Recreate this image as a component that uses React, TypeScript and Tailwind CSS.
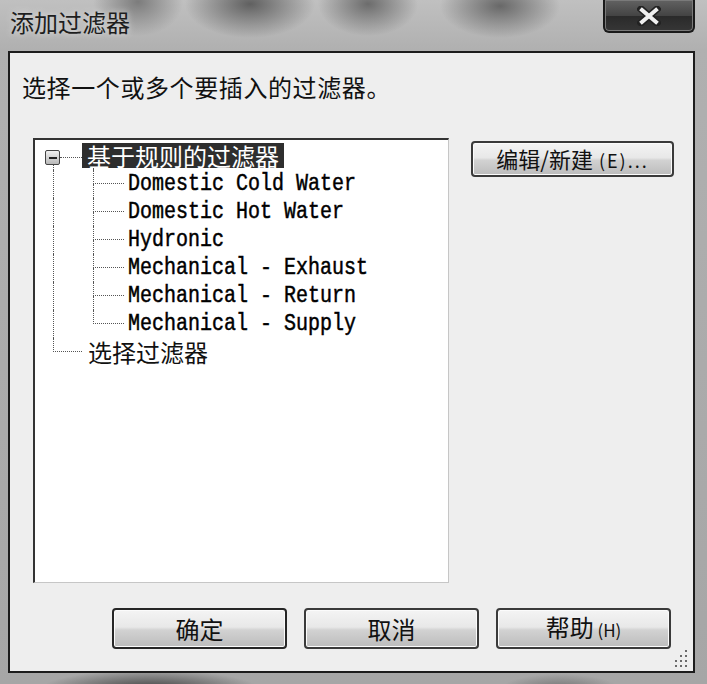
const cjk = "font-['Noto_Sans_CJK_SC','Noto_Sans',sans-serif]";
const mono = "font-['Liberation_Mono','DejaVu_Sans_Mono',monospace]";

const children = [
  "Domestic Cold Water",
  "Domestic Hot Water",
  "Hydronic",
  "Mechanical - Exhaust",
  "Mechanical - Return",
  "Mechanical - Supply",
];

function WinButton({ children, className = "" }: { children: React.ReactNode; className?: string }) {
  return (
    <div
      className={`flex items-center justify-center rounded-[4px] border-2 border-[#3a3a3a] bg-[linear-gradient(to_bottom,#f4f4f4_0%,#e8e8e8_46%,#d2d2d2_54%,#bcbcbc_100%)] shadow-[inset_0_0_0_1px_#fbfbfb] text-[#111] ${className}`}
    >
      {children}
    </div>
  );
}

function Grip() {
  const dots = [
    [14, 0], [14, 5], [9, 5], [14, 10], [9, 10], [4, 10], [14, 15], [9, 15], [4, 15],
  ];
  return (
    <svg width="19" height="18" viewBox="0 0 19 18">
      {dots.map(([x, y], i) => (
        <rect key={i} x={x} y={y} width="2" height="2" fill="#6a6a6a" />
      ))}
    </svg>
  );
}

export default function App() {
  return (
    <div className="w-[707px] h-[684px] overflow-hidden flex flex-col bg-[radial-gradient(ellipse_45px_34px_at_138px_2px,#7c7c7c,transparent),radial-gradient(ellipse_65px_34px_at_250px_4px,#606060,transparent),radial-gradient(ellipse_50px_32px_at_368px_4px,#6c6c6c,transparent),radial-gradient(ellipse_60px_32px_at_500px_6px,#686868,transparent),radial-gradient(ellipse_110px_20px_at_150px_690px,#3c3c3c,transparent),radial-gradient(ellipse_60px_16px_at_560px_690px,#707070,transparent),linear-gradient(to_bottom,#c0c0c0,#b0b0b0_50px,#a6a6a6)]">
      {/* title bar */}
      <div className="h-[51px] flex justify-between items-start shrink-0">
        <div className={`${cjk} pl-[10px] pt-[8px] text-[24px] leading-[28px] text-[#1e1e1e] [text-shadow:0_0_6px_#e6e6e6]`}>
          添加过滤器
        </div>
        <div className="mr-[12px] w-[92px] h-[33px] rounded-b-[6px] border-2 border-t-0 border-[#1a1a1a] bg-[linear-gradient(to_bottom,#626262,#444_50%,#2a2a2a_52%,#363636)] shadow-[inset_0_0_0_1px_#7a7a7a] flex items-center justify-center">
          <svg width="24" height="20" viewBox="0 0 24 20">
            <path d="M4 3 L20 17 M20 3 L4 17" stroke="#222" strokeWidth="7" strokeLinecap="square" />
            <path d="M5 4 L19 16 M19 4 L5 16" stroke="#f0f0f0" strokeWidth="4" strokeLinecap="square" />
          </svg>
        </div>
      </div>

      {/* client area */}
      <div className="ml-[8px] w-[687px] h-[622px] border-2 border-[#1c1c1c] bg-[#eeeeee] flex flex-col">
        <div className={`${cjk} ml-[12px] mt-[20px] text-[24px] leading-[28px] tracking-[0.6px] text-[#111]`}>
          选择一个或多个要插入的过滤器。
        </div>

        <div className="flex items-start mt-[37px]">
          {/* tree */}
          <div className="ml-[23px] w-[416px] h-[445px] bg-white border-t-2 border-l-2 border-[#333] border-r border-b border-r-[#c6c6c6] border-b-[#c6c6c6] pt-[2px] flex flex-col">
            {/* root row */}
            <div className="flex h-[28px]">
              <div className="w-[47px] flex flex-col">
                <div className="h-[8px]" />
                <div className="flex items-center h-[15px]">
                  <div className="ml-[10px] w-[15px] h-[15px] border border-[#444] rounded-[2px] bg-[linear-gradient(to_bottom,#f0f0f0,#b8b8b8)] flex items-center justify-center">
                    <div className="w-[8px] h-[2px] bg-[#222]" />
                  </div>
                  <div className="flex-1 border-t border-dotted border-[#555]" />
                </div>
                <div className="flex-1 ml-[18px] border-l border-dotted border-[#555]" />
              </div>
              <div className="flex flex-col">
                <div className={`${cjk} mt-[1px] h-[25px] px-[5px] bg-[#2e2e2e] text-white text-[24px] leading-[25px]`}>
                  基于规则的过滤器
                </div>
                <div className="flex-1 ml-[11px] border-l border-dotted border-[#555]" />
              </div>
            </div>

            {children.map((name, i) => {
              const last = i === children.length - 1;
              return (
                <div key={name} className="flex h-[28px]">
                  <div className="w-[47px] flex">
                    <div className="ml-[18px] border-l border-dotted border-[#555]" />
                  </div>
                  <div className="w-[46px] flex flex-col">
                    <div className="ml-[11px] w-[31px] h-[14px] border-l border-b border-dotted border-[#555]" />
                    {!last && <div className="ml-[11px] flex-1 border-l border-dotted border-[#555]" />}
                  </div>
                  <div className={`${mono} inline-block scale-y-[1.15] text-[20px] leading-[28px] text-black [-webkit-text-stroke:0.4px_#000] whitespace-pre`}>
                    {name}
                  </div>
                </div>
              );
            })}

            <div className="flex h-[28px]">
              <div className="w-[47px] flex flex-col">
                <div className="ml-[18px] w-[29px] h-[14px] border-l border-b border-dotted border-[#555]" />
              </div>
              <div className={`${cjk} ml-[6px] text-[24px] leading-[28px] text-[#111]`}>选择过滤器</div>
            </div>
          </div>

          <WinButton className="ml-[22px] mt-[3px] w-[203px] h-[36px]">
            <span className={`${cjk} text-[22px] leading-[28px]`}>
              编辑/新建<span className="text-[18px] tracking-[2px]"> (E)...</span>
            </span>
          </WinButton>
        </div>

        <div className="flex ml-[102px] mt-[25px] gap-[17px]">
          <WinButton className="w-[175px] h-[41px] border-[#262626]">
            <span className={`${cjk} text-[24px] leading-[28px]`}>确定</span>
          </WinButton>
          <WinButton className="w-[175px] h-[41px]">
            <span className={`${cjk} text-[24px] leading-[28px]`}>取消</span>
          </WinButton>
          <WinButton className="w-[175px] h-[41px]">
            <span className={`${cjk} text-[24px] leading-[28px]`}>
              帮助<span className="text-[17px]"> (H)</span>
            </span>
          </WinButton>
        </div>

        <div className="self-end mr-[3px] mt-[1px]">
          <Grip />
        </div>
      </div>
    </div>
  );
}
